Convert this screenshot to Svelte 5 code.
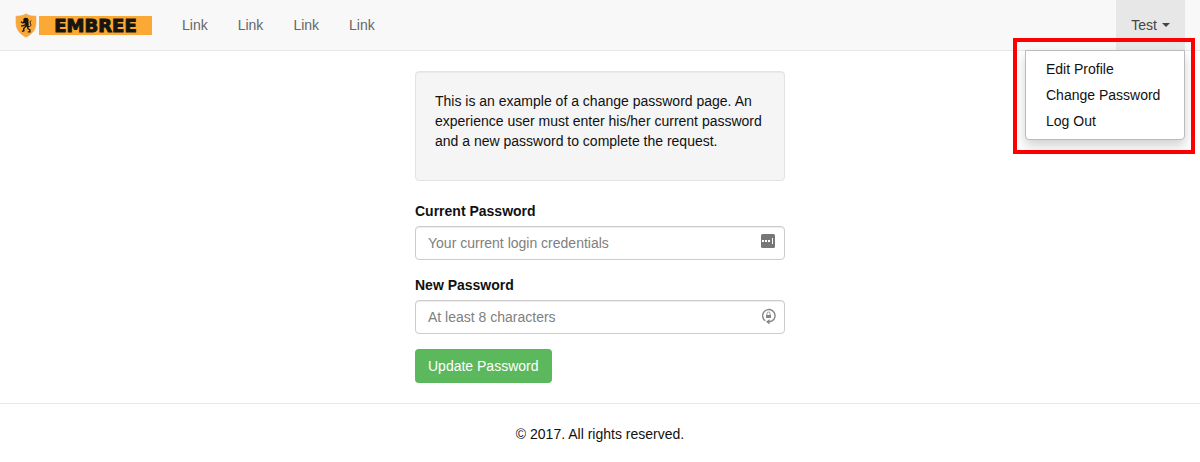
<script>
  const links = ['Link', 'Link', 'Link', 'Link'];
  const menu = ['Edit Profile', 'Change Password', 'Log Out'];
  let open = $state(true);
</script>

<nav class="navbar">
  <a class="brand" href="#home" aria-label="Embree">
    <svg class="shield" viewBox="0 0 22 25" aria-hidden="true">
      <path d="M11 .8C8 2.800 4.500 3.200 1 3.200c.2 4-.5 7.500.8 11.500C3.500 19.500 7 22 11 24.200c4-2.200 7.500-4.700 9.200-9.500C21.500 10.700 20.800 7.200 21 3.200 17.500 3.200 14 2.800 11 .8z" fill="#fca834" stroke="#e5a85c" stroke-width=".6" />
      <path d="M8.200 6l1.600-1.200 2.600.2 1.200 1.600-.2 2.400.4 2.500-.7 2.500-3-.4.2-2.300-.8-2-1.800-.6.9-.9z" fill="#17150f" />
      <g fill="none" stroke="#17150f" stroke-width="1.300">
        <path d="M10 9.500L7.500 9.800 5.800 8.800M10.500 11.500L8 12.800H6" />
        <path d="M11 13l-2.300 2.500.2 2.200-1.900.6M12.500 13l.4 2.500 2 1.300v2h-2.100" />
        <path d="M13 13.500c3 .5 3.200-1.500 2.500-2.800-.7-1.300-.5-2.700.8-3.200" stroke-width="1" />
      </g>
    </svg>
    <span class="wordmark">EMBREE</span>
  </a>
  <ul class="links">
    {#each links as link}
      <li><a href="#link">{link}</a></li>
    {/each}
  </ul>
  <div class="account">
    <button class="toggle" class:open type="button" aria-expanded={open} onclick={() => (open = !open)}>
      Test <span class="caret"></span>
    </button>
    {#if open}
      <div class="popup">
        <ul class="menu">
          {#each menu as item}
            <li><a href="#account">{item}</a></li>
          {/each}
        </ul>
      </div>
    {/if}
  </div>
</nav>

<main>
  <div class="well">
    <p>This is an example of a change password page. An experience user must enter his/her current password and a new password to complete the request.</p>
  </div>
  <form onsubmit={(e) => e.preventDefault()}>
    <div class="group">
      <label for="current">Current Password</label>
      <div class="field">
        <input id="current" type="password" placeholder="Your current login credentials" />
        <svg class="icon" viewBox="0 0 16 18" aria-hidden="true">
          <rect x="1" y="1" width="14" height="14" rx="1.500" fill="#777" />
          <path d="M2 7h2v2H2zM5 7h2v2H5zM8 7h2v2H8zM12 5h1v6h-1z" fill="#fff" />
        </svg>
      </div>
    </div>
    <div class="group">
      <label for="new">New Password</label>
      <div class="field">
        <input id="new" type="password" placeholder="At least 8 characters" />
        <svg class="icon" viewBox="0 0 16 18" aria-hidden="true">
          <path d="M5.300 13.800A6.200 6.200 0 1 1 14 12.200Q12.300 14.800 8 14.800" fill="none" stroke="#858585" stroke-width="1.400" />
          <path d="M9.500 12.200v5.200L6 14.800z" fill="#858585" />
          <path d="M7 8V6.500a1.500 1.500 0 0 1 3 0V8" fill="none" stroke="#999" />
          <rect x="6" y="8" width="5" height="3" fill="#858585" />
        </svg>
      </div>
    </div>
    <button class="submit" type="submit">Update Password</button>
  </form>
</main>

<footer>© 2017. All rights reserved.</footer>

<style>
  :global(body) {
    margin: 0;
    background: #fff;
    color: #111;
    font: 14px/20px "Helvetica Neue", "Liberation Sans", Arial, sans-serif;
  }
  * { box-sizing: border-box; }
  ul { list-style: none; margin: 0; padding: 0; }
  a { color: inherit; text-decoration: none; }
  button, input { font: inherit; }
  .navbar {
    display: flex;
    padding: 0 15px;
    background: #f8f8f8;
    border-bottom: 1px solid #e7e7e7;
    margin-bottom: 20px;
  }
  .brand {
    display: flex;
    align-items: center;
    gap: 2px;
    margin-right: 15px;
  }
  .shield { width: 22px; height: 25px; }
  .wordmark {
    width: 113px;
    height: 19px;
    background: #fca834;
    color: #17150f;
    font: bold 18px/19px "DejaVu Sans", sans-serif;
    -webkit-text-stroke: 1px #17150f;
    text-align: center;
  }
  .links { display: flex; }
  .links a { display: block; padding: 15px; color: #666; }
  .account { position: relative; margin-left: auto; }
  .toggle {
    display: flex;
    align-items: center;
    gap: 5px;
    height: 50px;
    padding: 0 15px;
    border: 0;
    background: transparent;
    color: #444;
  }
  .toggle.open { background: #e7e7e7; }
  .caret {
    border: 4px solid transparent;
    border-top-color: #444;
    border-bottom: 0;
  }
  .popup {
    position: absolute;
    top: 38px;
    right: -10px;
    padding: 8px 6px 10px 8px;
    border: 4px solid #f00;
  }
  .menu {
    min-width: 160px;
    padding: 5px 0;
    background: #fff;
    border: 1px solid #bbb;
    border-radius: 0 0 4px 4px;
    box-shadow: 0 6px 12px rgba(0, 0, 0, 0.18);
  }
  .menu a { display: block; padding: 3px 20px; white-space: nowrap; }
  main { max-width: 370px; margin: 0 auto 20px; }
  .well {
    padding: 19px;
    margin-bottom: 20px;
    background: #f5f5f5;
    border: 1px solid #e3e3e3;
    border-radius: 4px;
    box-shadow: inset 0 1px 1px rgba(0, 0, 0, 0.05);
  }
  .well p { margin: 0 0 10px; }
  .group { margin-bottom: 15px; }
  label { display: block; margin-bottom: 5px; font-weight: bold; }
  .field { position: relative; }
  input {
    display: block;
    width: 100%;
    height: 34px;
    padding: 6px 12px;
    background: #fff;
    border: 1px solid #ccc;
    border-radius: 4px;
    box-shadow: inset 0 1px 1px rgba(0, 0, 0, 0.075);
  }
  input::placeholder { color: #808080; opacity: 1; }
  .icon {
    position: absolute;
    top: 7px;
    right: 9px;
    width: 16px;
    height: 18px;
  }
  .submit {
    display: block;
    height: 34px;
    padding: 0 13px;
    border: 0;
    border-radius: 4px;
    background: #5cb85c;
    color: #fff;
  }
  footer { padding: 20px 15px; border-top: 1px solid #e7e7e7; text-align: center; }
</style>
